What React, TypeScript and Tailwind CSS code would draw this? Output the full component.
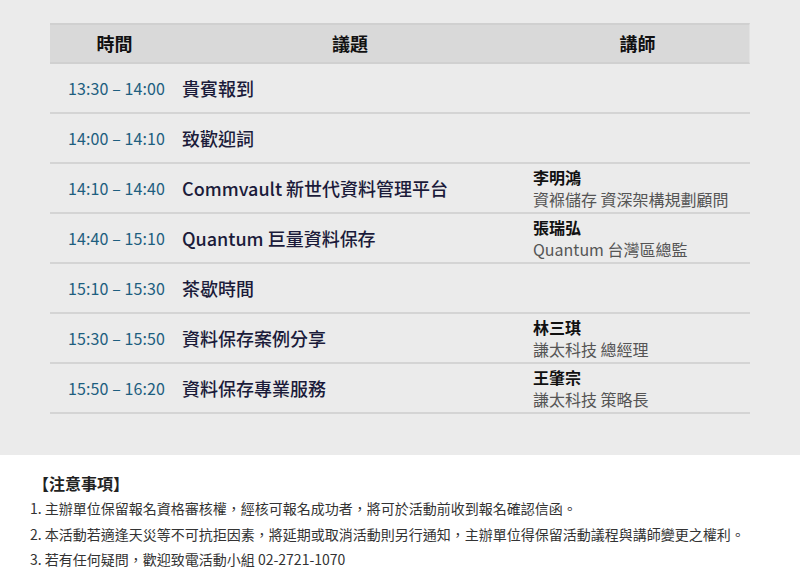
import React from 'react';

interface Session {
  time: string;
  topic: string;
  speaker?: string;
  title?: string;
}

const sessions: Session[] = [
  { time: '13:30 – 14:00', topic: '貴賓報到' },
  { time: '14:00 – 14:10', topic: '致歡迎詞' },
  { time: '14:10 – 14:40', topic: 'Commvault 新世代資料管理平台', speaker: '李明鴻', title: '資褓儲存 資深架構規劃顧問' },
  { time: '14:40 – 15:10', topic: 'Quantum 巨量資料保存', speaker: '張瑞弘', title: 'Quantum 台灣區總監' },
  { time: '15:10 – 15:30', topic: '茶歇時間' },
  { time: '15:30 – 15:50', topic: '資料保存案例分享', speaker: '林三琪', title: '謙太科技 總經理' },
  { time: '15:50 – 16:20', topic: '資料保存專業服務', speaker: '王肇宗', title: '謙太科技 策略長' },
];

const notes = [
  '1. 主辦單位保留報名資格審核權，經核可報名成功者，將可於活動前收到報名確認信函。',
  '2. 本活動若適逢天災等不可抗拒因素，將延期或取消活動則另行通知，主辦單位得保留活動議程與講師變更之權利。',
  '3. 若有任何疑問，歡迎致電活動小組 02-2721-1070',
];

export default function App() {
  return (
    <div className="w-[800px] h-[585px] bg-white font-['Noto_Sans_CJK_TC','Noto_Sans',sans-serif]">
      <div className="bg-[#ebebeb] pt-[23px] h-[455px]">
        <div className="w-[700px] mx-auto">
          <div className="grid grid-cols-[125px_350px_225px] h-[41px] bg-[#d9d9d9] border-t-2 border-b-2 border-[#d0d0d0] border-r border-r-[#e2e2e2] items-center text-[18px] font-bold text-[#111]">
            <div className="text-center pl-[4px]">時間</div>
            <div className="text-center">議題</div>
            <div className="text-center">講師</div>
          </div>
          {sessions.map((s) => (
            <div key={s.time} className="grid grid-cols-[125px_350px_225px] h-[50px] border-b-2 border-[#d4d4d4] items-center">
              <div className="pl-[18px] text-[16px] text-[#1d5e7f] tracking-[0.1px] whitespace-nowrap">{s.time}</div>
              <div className="pl-[7px] text-[18px] font-medium text-[#1b1b3a] whitespace-nowrap">{s.topic}</div>
              <div className="pl-[8px]">
                {s.speaker && (
                  <>
                    <div className="text-[16px] leading-[22px] font-bold text-[#111]">{s.speaker}</div>
                    <div className="text-[16px] leading-[22px] text-[#555]">{s.title}</div>
                  </>
                )}
              </div>
            </div>
          ))}
        </div>
      </div>
      <div className="pl-[30px] pt-[16px] text-[#333]">
        <div className="text-[16px] font-bold text-[#222] leading-[25px] pl-[3px]">【注意事項】</div>
        <div className="text-[14px] leading-[25.5px]">
          {notes.map((n) => (
            <div key={n}>{n}</div>
          ))}
        </div>
      </div>
    </div>
  );
}
